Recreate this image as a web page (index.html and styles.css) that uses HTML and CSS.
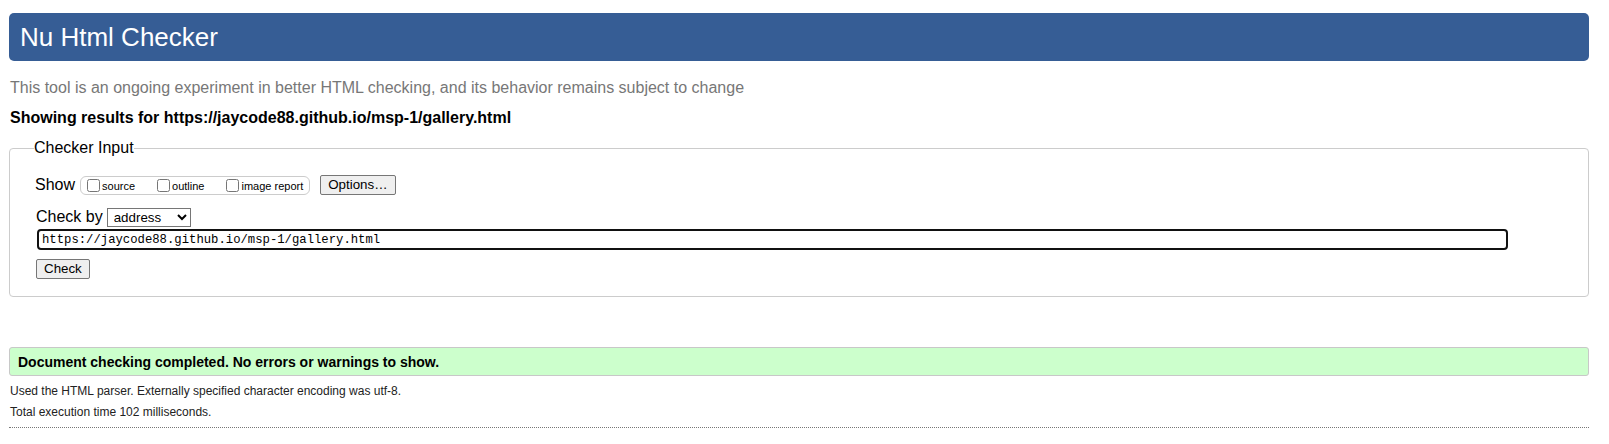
FILE: index.html
```html
<!DOCTYPE html>
<html lang="en">
<head>
<meta charset="utf-8">
<title>Nu Html Checker</title>
<link rel="stylesheet" href="styles.css">
</head>
<body>
<div class="page">
  <h1 class="title">Nu Html Checker</h1>
  <p class="intro">This tool is an ongoing experiment in better HTML checking, and its behavior remains subject to change</p>
  <p class="results">Showing results for https://jaycode88.github.io/msp-1/gallery.html</p>
  <form class="checker">
    <fieldset class="input-set">
      <legend class="legend">Checker Input</legend>
      <div class="row row-show">
        <span class="label label-show">Show</span>
        <span class="show-group">
          <label class="opt"><input type="checkbox" class="cb">source</label>
          <label class="opt"><input type="checkbox" class="cb">outline</label>
          <label class="opt opt-last"><input type="checkbox" class="cb">image report</label>
        </span>
        <button type="button" class="btn btn-options">Options…</button>
      </div>
      <div class="row row-by">
        <span class="label label-by">Check by</span>
        <select class="sel"><option>address</option></select>
      </div>
      <div class="row row-url">
        <input class="url" type="text" value="https://jaycode88.github.io/msp-1/gallery.html">
      </div>
      <div class="row row-check">
        <button type="button" class="btn btn-check">Check</button>
      </div>
    </fieldset>
  </form>
  <p class="success">Document checking completed. No errors or warnings to show.</p>
  <p class="details details-first">Used the HTML parser. Externally specified character encoding was utf-8.</p>
  <p class="details">Total execution time 102 milliseconds.</p>
  <hr class="rule">
</div>
</body>
</html>
```
FILE: styles.css
```css
html, body {
  margin: 0;
  padding: 0;
  background: #ffffff;
}

body {
  font-family: "Liberation Sans", Arial, sans-serif;
  color: #000000;
}

.page {
  padding: 13px 20px 0 9px;
}

.title {
  margin: 0;
  height: 48px;
  box-sizing: border-box;
  padding: 9px 11px;
  line-height: 30px;
  font-size: 26px;
  font-weight: normal;
  color: #ffffff;
  background: #365d95;
  border-radius: 5px;
}

.intro {
  margin: 18px 0 0 1px;
  font-size: 16px;
  line-height: 18px;
  color: #777777;
}

.results {
  margin: 12px 0 0 1px;
  font-size: 16px;
  line-height: 18px;
  font-weight: bold;
  color: #000000;
}

.checker {
  margin: 12px 0 0;
}

.input-set {
  margin: 0;
  padding: 0 0 17px 25px;
  border: 1px solid #cccccc;
  border-radius: 4px;
  min-width: 0;
}

.legend {
  padding: 0;
  margin-left: -1px;
  font-size: 16px;
  line-height: 18px;
  color: #000000;
}

.row {
  display: flex;
  align-items: center;
}

.label {
  font-size: 16px;
  line-height: 18px;
}

.label-show {
  margin-right: 5px;
}

.label-by {
  margin-left: 1px;
  margin-right: 4px;
}

.row-show {
  height: 20px;
  margin-top: 18px;
}

.show-group {
  display: inline-flex;
  align-items: center;
  height: 19px;
  box-sizing: border-box;
  border: 1px solid #cccccc;
  border-radius: 6px;
  padding: 0 6px 0 2px;
}

.opt {
  display: inline-flex;
  align-items: center;
  font-size: 11px;
  margin-right: 18px;
  padding-top: 2px;
}

.opt-last {
  margin-right: 0;
}

.cb {
  width: 13px;
  height: 13px;
  margin: 0 2px 0 4px;
  position: relative;
  top: -1px;
}

.btn {
  font-family: "Liberation Sans", Arial, sans-serif;
  font-size: 13.33px;
  height: 20px;
  box-sizing: border-box;
  padding: 0 7px;
  border: 1px solid #767676;
  border-radius: 2px;
  background: #efefef;
  color: #000000;
  line-height: 18px;
}

.btn-options {
  margin-left: 10px;
}

.row-by {
  height: 20px;
  margin-top: 12px;
}

.sel {
  width: 84px;
  height: 19px;
  font-family: "Liberation Sans", Arial, sans-serif;
  font-size: 13.33px;
  border: 1px solid #767676;
  border-radius: 0;
  background: #ffffff;
  color: #000000;
  padding: 0 0 0 2px;
}

.row-url {
  margin-top: 2px;
}

.url {
  width: 1471px;
  height: 21px;
  box-sizing: border-box;
  margin-left: 2px;
  border: 2px solid #111111;
  border-radius: 4px;
  padding: 0 0 0 3px;
  font-family: "Liberation Mono", "DejaVu Sans Mono", monospace;
  font-size: 12.25px;
  color: #000000;
  background: #ffffff;
  outline: none;
}

.row-check {
  margin-top: 9px;
}

.btn-check {
  margin-left: 1px;
}

.success {
  margin: 50px 0 0;
  height: 29px;
  box-sizing: border-box;
  border: 1px solid #c8c8c8;
  border-radius: 3px;
  background: #ccffcc;
  padding: 1px 8px 0;
  font-size: 14px;
  line-height: 26px;
  font-weight: bold;
  color: #000000;
}

.details {
  margin: 0 0 0 1px;
  font-size: 12px;
  line-height: 21px;
  color: #222222;
}

.details-first {
  margin-top: 5px;
}

.rule {
  margin: 4px 0 0;
  height: 0;
  border: 0;
  border-top: 1px dotted #777777;
}
```
